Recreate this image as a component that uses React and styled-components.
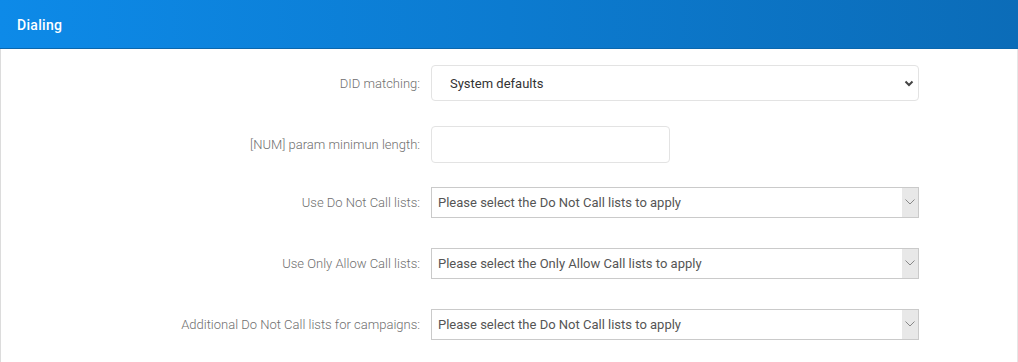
import React from 'react'
import styled, { createGlobalStyle } from 'styled-components'

const GlobalStyle = createGlobalStyle`
    body {
        margin: 0;
        background: white;
        font-family: Roboto, "Liberation Sans", sans-serif;
    }
`

const chevron = `url("data:image/svg+xml,%3Csvg xmlns='http://www.w3.org/2000/svg' width='10' height='8' viewBox='0 0 10 8'%3E%3Cpath d='M1.5 2.5 L5 6 L8.5 2.5' fill='none' stroke='%23444' stroke-width='2'/%3E%3C/svg%3E")`

function Select2Box({ placeholder }) {
    return (
        <Select2>
            <Select2Text>{placeholder}</Select2Text>
            <Select2Arrow>
                <svg width="10" height="6" viewBox="0 0 10 6">
                    <path d="M0.5 0.5 L5 5 L9.5 0.5" fill="none" stroke="#888" strokeWidth="1" />
                </svg>
            </Select2Arrow>
        </Select2>
    )
}

function App() {
    return (
        <>
            <GlobalStyle />
            <Panel>
                <PanelHeader>
                    <PanelTitle>Dialing</PanelTitle>
                </PanelHeader>
                <PanelBody>
                    <Row>
                        <Label>DID matching:</Label>
                        <Select defaultValue="system">
                            <option value="system">System defaults</option>
                        </Select>
                    </Row>
                    <Row>
                        <Label>[NUM] param minimun length:</Label>
                        <Input type="text" />
                    </Row>
                    <Row $compact>
                        <Label>Use Do Not Call lists:</Label>
                        <Select2Box placeholder="Please select the Do Not Call lists to apply" />
                    </Row>
                    <Row $compact>
                        <Label>Use Only Allow Call lists:</Label>
                        <Select2Box placeholder="Please select the Only Allow Call lists to apply" />
                    </Row>
                    <Row $compact>
                        <Label>Additional Do Not Call lists for campaigns:</Label>
                        <Select2Box placeholder="Please select the Do Not Call lists to apply" />
                    </Row>
                </PanelBody>
            </Panel>
        </>
    )
}

export default App

const Panel = styled.div`
    width: 1018px;
    height: 362px;
    overflow: hidden;
`

const PanelHeader = styled.div`
    height: 49px;
    display: flex;
    align-items: center;
    padding-left: 17px;
    padding-top: 2px;
    box-sizing: border-box;
    background: linear-gradient(to right, #0d8ae8, #0b6cb8);
    border-bottom: 1px solid #0b67ad;
`

const PanelTitle = styled.div`
    color: white;
    font-size: 14px;
    font-weight: 500;
    letter-spacing: 0.3px;
`

const PanelBody = styled.div`
    border-left: 1px solid #dcdcdc;
    border-right: 1px solid #e6e6e6;
    padding-top: 16px;
    height: 100%;
`

const Row = styled.div`
    display: grid;
    grid-template-columns: 419px 488px;
    column-gap: 11px;
    align-items: center;
    height: ${p => (p.$compact ? '31px' : '36px')};
    margin-bottom: ${p => (p.$compact ? '30px' : '25px')};
`

const Label = styled.label`
    text-align: right;
    font-size: 13px;
    font-weight: 300;
    color: #6f6f6f;
    white-space: nowrap;
`

const Select = styled.select`
    appearance: none;
    height: 36px;
    width: 488px;
    box-sizing: border-box;
    border: 1px solid #e3e3e3;
    border-radius: 4px;
    padding: 0 0 0 18px;
    font-family: Roboto, "Liberation Sans", sans-serif;
    font-size: 13px;
    color: #333;
    background: white ${chevron} no-repeat right 4px center;
    outline: none;
`

const Input = styled.input`
    height: 37px;
    width: 239px;
    box-sizing: border-box;
    border: 1px solid #e3e3e3;
    border-radius: 4px;
    outline: none;
`

const Select2 = styled.div`
    height: 31px;
    width: 488px;
    box-sizing: border-box;
    border: 1px solid #cacaca;
    display: flex;
    align-items: stretch;
    background: white;
`

const Select2Text = styled.div`
    flex: 1;
    display: flex;
    align-items: center;
    padding-left: 6px;
    font-size: 13px;
    color: #555;
`

const Select2Arrow = styled.div`
    width: 16px;
    background: #e8e8e8;
    display: flex;
    align-items: center;
    justify-content: center;
    padding-bottom: 1px;
`
